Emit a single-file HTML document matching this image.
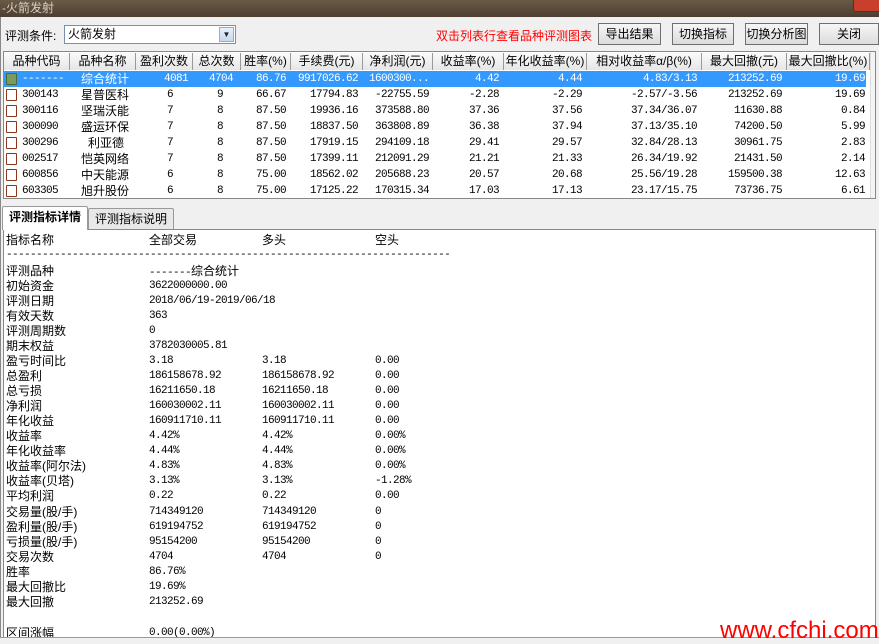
<!DOCTYPE html>
<html><head><meta charset="utf-8"><style>
*{margin:0;padding:0;box-sizing:border-box}
body{width:879px;height:642px;overflow:hidden;background:#f0f0f0;font-family:"Liberation Sans","Noto Sans CJK SC",sans-serif;font-size:12px;color:#000;position:relative}
.n{font-family:"Liberation Mono","Noto Sans CJK SC",monospace;font-size:11px;letter-spacing:-0.6px}
#title{position:absolute;left:0;top:0;width:879px;height:18px;background:linear-gradient(#6a5a48,#4a3c2e);color:#d8cfc4;font-size:12px;line-height:17px;padding-left:2px}
#close{position:absolute;right:-4px;top:-4px;width:30px;height:16px;background:#c8402c;border:1px solid #7a2010;border-radius:3px}
#frame{position:absolute;left:0;top:17px;width:879px;height:625px;background:#f0f0f0;border-left:1px solid #888}
.btn{position:absolute;top:23px;height:22px;border:1px solid #707070;background:linear-gradient(#f6f6f6,#dcdcdc);text-align:center;line-height:20px;font-size:12px}
#combo{position:absolute;left:64px;top:25px;width:172px;height:19px;border:1px solid #7a8fa8;background:#fff;padding-left:3px;line-height:17px}
#combo b{position:absolute;right:1px;top:1px;width:15px;height:15px;background:linear-gradient(#e8f0fa,#c8d8ec);border:1px solid #98acc6;font-size:8px;line-height:13px;text-align:center;color:#223}
#list{position:absolute;left:3px;top:51px;width:873px;height:148px;background:#fff;border:1px solid #888;overflow:hidden}
.row{position:absolute;left:0;height:16px;width:866px;line-height:16px;white-space:nowrap}
.row>span{position:absolute;top:0}
.hdr{top:1px;height:17px;background:linear-gradient(#fafafa,#e6e6e6)}
.hdr span{border-right:1px solid #999;height:17px;text-align:center;line-height:16px}
.sel{background:#3399ff;color:#fff}
.r{text-align:right}
.ico{position:absolute;left:2px;top:2px;width:11px;height:12px;border:1px solid #8a3a1a;border-radius:1px;background:#fff}
#tabs{position:absolute;left:0;top:206px;width:879px;height:24px}
.tab{position:absolute;top:2px;height:22px;border:1px solid #999;border-bottom:none;background:#e8e8e8;line-height:20px;padding:0 6px;border-radius:2px 2px 0 0;white-space:nowrap}
#det{position:absolute;left:3px;top:229px;width:873px;height:409px;background:#fff;border:1px solid #888;overflow:hidden}
.l{position:absolute;left:2px;height:15px;line-height:15px;white-space:nowrap}
.l>span{position:absolute;top:0}
#wm{position:absolute;left:720px;top:619px;color:#f00;font-size:24px;font-family:"Liberation Sans",sans-serif;line-height:24px}
</style></head><body>
<div id="title">-火箭发射</div><div id="close"></div>
<div id="frame"></div>
<div style="position:absolute;left:5px;top:27px">评测条件:</div>
<div id="combo">火箭发射<b>▼</b></div>
<div style="position:absolute;left:436px;top:27px;color:#f00">双击列表行查看品种评测图表</div>
<div class="btn" style="left:598px;width:63px">导出结果</div>
<div class="btn" style="left:672px;width:62px">切换指标</div>
<div class="btn" style="left:745px;width:63px">切换分析图</div>
<div class="btn" style="left:819px;width:60px">关闭</div>

<div id="list">
<div class="row hdr">
<span style="left:0;width:66px">品种代码</span><span style="left:66px;width:66px">品种名称</span><span style="left:132px;width:57px">盈利次数</span><span style="left:189px;width:48px">总次数</span><span style="left:237px;width:50px">胜率(%)</span><span style="left:287px;width:72px">手续费(元)</span><span style="left:359px;width:70px">净利润(元)</span><span style="left:429px;width:71px">收益率(%)</span><span style="left:500px;width:83px">年化收益率(%)</span><span style="left:583px;width:115px">相对收益率α/β(%)</span><span style="left:698px;width:85px">最大回撤(元)</span><span style="left:783px;width:83px">最大回撤比(%)</span>
</div>
<div class="row sel" style="top:19px;width:862px"><i class="ico" style="background:#7a9a60;border-color:#4a6a3a"></i><span class="n" style="left:18px">-------</span><span style="left:77px">综合统计</span><span class="n r" style="left:132px;width:52px">4081</span><span class="n r" style="left:189px;width:40px">4704</span><span class="n r" style="left:237px;width:45px">86.76</span><span class="n r" style="left:287px;width:67px">9917026.62</span><span class="n r" style="left:359px;width:66px">1600300...</span><span class="n r" style="left:429px;width:66px">4.42</span><span class="n r" style="left:500px;width:78px">4.44</span><span class="n r" style="left:583px;width:110px">4.83/3.13</span><span class="n r" style="left:698px;width:80px">213252.69</span><span class="n r" style="left:783px;width:78px">19.69</span></div>
<div class="row" style="top:35px"><i class="ico"></i><span class="n" style="left:18px">300143</span><span style="left:77px">星普医科</span><span class="n r" style="left:132px;width:37px">6</span><span class="n r" style="left:189px;width:30px">9</span><span class="n r" style="left:237px;width:45px">66.67</span><span class="n r" style="left:287px;width:67px">17794.83</span><span class="n r" style="left:359px;width:66px">-22755.59</span><span class="n r" style="left:429px;width:66px">-2.28</span><span class="n r" style="left:500px;width:78px">-2.29</span><span class="n r" style="left:583px;width:110px">-2.57/-3.56</span><span class="n r" style="left:698px;width:80px">213252.69</span><span class="n r" style="left:783px;width:78px">19.69</span></div>
<div class="row" style="top:51px"><i class="ico"></i><span class="n" style="left:18px">300116</span><span style="left:77px">坚瑞沃能</span><span class="n r" style="left:132px;width:37px">7</span><span class="n r" style="left:189px;width:30px">8</span><span class="n r" style="left:237px;width:45px">87.50</span><span class="n r" style="left:287px;width:67px">19936.16</span><span class="n r" style="left:359px;width:66px">373588.80</span><span class="n r" style="left:429px;width:66px">37.36</span><span class="n r" style="left:500px;width:78px">37.56</span><span class="n r" style="left:583px;width:110px">37.34/36.07</span><span class="n r" style="left:698px;width:80px">11630.88</span><span class="n r" style="left:783px;width:78px">0.84</span></div>
<div class="row" style="top:67px"><i class="ico"></i><span class="n" style="left:18px">300090</span><span style="left:77px">盛运环保</span><span class="n r" style="left:132px;width:37px">7</span><span class="n r" style="left:189px;width:30px">8</span><span class="n r" style="left:237px;width:45px">87.50</span><span class="n r" style="left:287px;width:67px">18837.50</span><span class="n r" style="left:359px;width:66px">363808.89</span><span class="n r" style="left:429px;width:66px">36.38</span><span class="n r" style="left:500px;width:78px">37.94</span><span class="n r" style="left:583px;width:110px">37.13/35.10</span><span class="n r" style="left:698px;width:80px">74200.50</span><span class="n r" style="left:783px;width:78px">5.99</span></div>
<div class="row" style="top:83px"><i class="ico"></i><span class="n" style="left:18px">300296</span><span style="left:84px">利亚德</span><span class="n r" style="left:132px;width:37px">7</span><span class="n r" style="left:189px;width:30px">8</span><span class="n r" style="left:237px;width:45px">87.50</span><span class="n r" style="left:287px;width:67px">17919.15</span><span class="n r" style="left:359px;width:66px">294109.18</span><span class="n r" style="left:429px;width:66px">29.41</span><span class="n r" style="left:500px;width:78px">29.57</span><span class="n r" style="left:583px;width:110px">32.84/28.13</span><span class="n r" style="left:698px;width:80px">30961.75</span><span class="n r" style="left:783px;width:78px">2.83</span></div>
<div class="row" style="top:99px"><i class="ico"></i><span class="n" style="left:18px">002517</span><span style="left:77px">恺英网络</span><span class="n r" style="left:132px;width:37px">7</span><span class="n r" style="left:189px;width:30px">8</span><span class="n r" style="left:237px;width:45px">87.50</span><span class="n r" style="left:287px;width:67px">17399.11</span><span class="n r" style="left:359px;width:66px">212091.29</span><span class="n r" style="left:429px;width:66px">21.21</span><span class="n r" style="left:500px;width:78px">21.33</span><span class="n r" style="left:583px;width:110px">26.34/19.92</span><span class="n r" style="left:698px;width:80px">21431.50</span><span class="n r" style="left:783px;width:78px">2.14</span></div>
<div class="row" style="top:115px"><i class="ico"></i><span class="n" style="left:18px">600856</span><span style="left:77px">中天能源</span><span class="n r" style="left:132px;width:37px">6</span><span class="n r" style="left:189px;width:30px">8</span><span class="n r" style="left:237px;width:45px">75.00</span><span class="n r" style="left:287px;width:67px">18562.02</span><span class="n r" style="left:359px;width:66px">205688.23</span><span class="n r" style="left:429px;width:66px">20.57</span><span class="n r" style="left:500px;width:78px">20.68</span><span class="n r" style="left:583px;width:110px">25.56/19.28</span><span class="n r" style="left:698px;width:80px">159500.38</span><span class="n r" style="left:783px;width:78px">12.63</span></div>
<div class="row" style="top:131px"><i class="ico"></i><span class="n" style="left:18px">603305</span><span style="left:77px">旭升股份</span><span class="n r" style="left:132px;width:37px">6</span><span class="n r" style="left:189px;width:30px">8</span><span class="n r" style="left:237px;width:45px">75.00</span><span class="n r" style="left:287px;width:67px">17125.22</span><span class="n r" style="left:359px;width:66px">170315.34</span><span class="n r" style="left:429px;width:66px">17.03</span><span class="n r" style="left:500px;width:78px">17.13</span><span class="n r" style="left:583px;width:110px">23.17/15.75</span><span class="n r" style="left:698px;width:80px">73736.75</span><span class="n r" style="left:783px;width:78px">6.61</span></div>
<div style="position:absolute;left:866px;top:0;width:7px;height:148px;background:#f4f4f4;border-left:1px solid #ddd"></div>
</div>

<div id="tabs">
<div class="tab" style="left:2px;top:0;height:24px;background:#fff;font-weight:bold;z-index:2">评测指标详情</div>
<div class="tab" style="left:88px">评测指标说明</div>
</div>

<div id="det">
<div class="l" style="top:3px"><span style="left:0">指标名称</span><span style="left:143px">全部交易</span><span style="left:256px">多头</span><span style="left:369px">空头</span></div>
<div class="l n" style="top:18px">--------------------------------------------------------------------------</div>
<div class="l" style="top:34px"><span style="left:0">评测品种</span><span style="left:143px"><i class="n" style="font-style:normal">-------</i>综合统计</span></div>
<div class="l" style="top:49px"><span style="left:0">初始资金</span><span class="n" style="left:143px">3622000000.00</span></div>
<div class="l" style="top:64px"><span style="left:0">评测日期</span><span class="n" style="left:143px">2018/06/19-2019/06/18</span></div>
<div class="l" style="top:79px"><span style="left:0">有效天数</span><span class="n" style="left:143px">363</span></div>
<div class="l" style="top:94px"><span style="left:0">评测周期数</span><span class="n" style="left:143px">0</span></div>
<div class="l" style="top:109px"><span style="left:0">期末权益</span><span class="n" style="left:143px">3782030005.81</span></div>
<div class="l" style="top:124px"><span style="left:0">盈亏时间比</span><span class="n" style="left:143px">3.18</span><span class="n" style="left:256px">3.18</span><span class="n" style="left:369px">0.00</span></div>
<div class="l" style="top:139px"><span style="left:0">总盈利</span><span class="n" style="left:143px">186158678.92</span><span class="n" style="left:256px">186158678.92</span><span class="n" style="left:369px">0.00</span></div>
<div class="l" style="top:154px"><span style="left:0">总亏损</span><span class="n" style="left:143px">16211650.18</span><span class="n" style="left:256px">16211650.18</span><span class="n" style="left:369px">0.00</span></div>
<div class="l" style="top:169px"><span style="left:0">净利润</span><span class="n" style="left:143px">160030002.11</span><span class="n" style="left:256px">160030002.11</span><span class="n" style="left:369px">0.00</span></div>
<div class="l" style="top:184px"><span style="left:0">年化收益</span><span class="n" style="left:143px">160911710.11</span><span class="n" style="left:256px">160911710.11</span><span class="n" style="left:369px">0.00</span></div>
<div class="l" style="top:199px"><span style="left:0">收益率</span><span class="n" style="left:143px">4.42%</span><span class="n" style="left:256px">4.42%</span><span class="n" style="left:369px">0.00%</span></div>
<div class="l" style="top:214px"><span style="left:0">年化收益率</span><span class="n" style="left:143px">4.44%</span><span class="n" style="left:256px">4.44%</span><span class="n" style="left:369px">0.00%</span></div>
<div class="l" style="top:229px"><span style="left:0">收益率(阿尔法)</span><span class="n" style="left:143px">4.83%</span><span class="n" style="left:256px">4.83%</span><span class="n" style="left:369px">0.00%</span></div>
<div class="l" style="top:244px"><span style="left:0">收益率(贝塔)</span><span class="n" style="left:143px">3.13%</span><span class="n" style="left:256px">3.13%</span><span class="n" style="left:369px">-1.28%</span></div>
<div class="l" style="top:259px"><span style="left:0">平均利润</span><span class="n" style="left:143px">0.22</span><span class="n" style="left:256px">0.22</span><span class="n" style="left:369px">0.00</span></div>
<div class="l" style="top:275px"><span style="left:0">交易量(股/手)</span><span class="n" style="left:143px">714349120</span><span class="n" style="left:256px">714349120</span><span class="n" style="left:369px">0</span></div>
<div class="l" style="top:290px"><span style="left:0">盈利量(股/手)</span><span class="n" style="left:143px">619194752</span><span class="n" style="left:256px">619194752</span><span class="n" style="left:369px">0</span></div>
<div class="l" style="top:305px"><span style="left:0">亏损量(股/手)</span><span class="n" style="left:143px">95154200</span><span class="n" style="left:256px">95154200</span><span class="n" style="left:369px">0</span></div>
<div class="l" style="top:320px"><span style="left:0">交易次数</span><span class="n" style="left:143px">4704</span><span class="n" style="left:256px">4704</span><span class="n" style="left:369px">0</span></div>
<div class="l" style="top:335px"><span style="left:0">胜率</span><span class="n" style="left:143px">86.76%</span></div>
<div class="l" style="top:350px"><span style="left:0">最大回撤比</span><span class="n" style="left:143px">19.69%</span></div>
<div class="l" style="top:365px"><span style="left:0">最大回撤</span><span class="n" style="left:143px">213252.69</span></div>
<div class="l" style="top:396px"><span style="left:0">区间涨幅</span><span class="n" style="left:143px">0.00(0.00%)</span></div>
</div>
<div style="position:absolute;left:0;top:637px;width:879px;height:5px;background:#f0f0f0;border-top:1px solid #999"></div>
<div id="wm">www.cfchi.com</div>
</body></html>
